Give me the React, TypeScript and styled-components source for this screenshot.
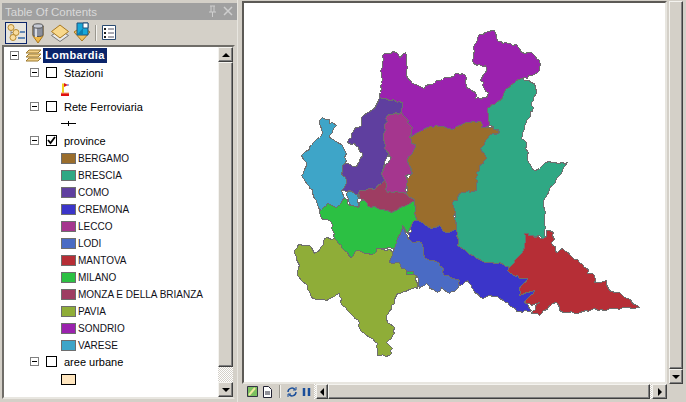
import styled, { createGlobalStyle } from 'styled-components'

const GlobalStyle = createGlobalStyle`
  html, body { margin: 0; padding: 0; background: #d4d0c8; overflow: hidden; }
  #root { width: 686px; height: 402px; }
`

// Window layout
const Shell = styled.div`
  width: 686px;
  height: 402px;
  display: grid;
  grid-template-columns: 238px 448px;
  background: #d4d0c8;
  font-family: 'Liberation Sans', Arial, sans-serif;
  font-size: 11px;
  color: #000;
  overflow: hidden;
`

const Dock = styled.div`
  display: flex;
  flex-direction: column;
  padding: 3px 0 3px 2px;
  box-sizing: border-box;
  height: 402px;
  border-right: 1px solid #e8e6e0;
`

const TitleBar = styled.div`
  height: 17px;
  flex: none;
  background: #a0a0a0;
  color: #d9d9d9;
  display: flex;
  align-items: center;
  padding-left: 3px;
  font-size: 11.500px;
`

const TitleText = styled.span`
  flex: 1;
`

const TitleIcon = styled.svg`
  width: 15px;
  height: 13px;
  flex: none;
  margin-right: 1px;
`

const Toolbar = styled.div`
  height: 25px;
  flex: none;
  display: flex;
  align-items: center;
  padding-left: 3px;
`

const ToolButton = styled.div<{ $active?: boolean }>`
  width: 22px;
  height: 22px;
  box-sizing: border-box;
  display: flex;
  align-items: center;
  justify-content: center;
  border: 1px solid ${(p) => (p.$active ? '#0a246a' : 'transparent')};
  background: ${(p) => (p.$active ? '#e6e4de' : 'transparent')};
`

const ToolSeparator = styled.div`
  width: 1px;
  height: 16px;
  margin: 0 2px;
  background: #9a978f;
  box-shadow: 1px 0 0 #f4f3ef;
`

const TreeFrame = styled.div`
  flex: 1;
  min-height: 0;
  display: flex;
  border: 2px solid;
  border-color: #6f6d68 #d4d0c8 #e8e6e0 #6f6d68;
  background: #fff;
  margin-right: 2px;
`

const Tree = styled.div`
  flex: 1;
  overflow: hidden;
`

const Row = styled.div<{ $indent: number }>`
  height: 17px;
  display: flex;
  align-items: center;
  padding-left: ${(p) => p.$indent}px;
  white-space: nowrap;
`

const Expander = styled.span`
  width: 9px;
  height: 9px;
  box-sizing: border-box;
  border: 1px solid #808080;
  background: #fff;
  flex: none;
  display: flex;
  align-items: center;
  justify-content: center;
  &::after {
    content: '';
    width: 5px;
    height: 1px;
    background: #000;
  }
`

const CheckBox = styled.span`
  width: 11px;
  height: 11px;
  box-sizing: border-box;
  border: 1px solid #000;
  margin-left: 7px;
  margin-right: 7px;
  flex: none;
  display: flex;
  background: #fff;
`

const RootIcon = styled.svg`
  margin-left: 6px;
  flex: none;
`

const RootLabel = styled.span`
  background: #0a246a;
  color: #fff;
  font-weight: bold;
  height: 15px;
  line-height: 15px;
  padding: 0 2px;
  margin-left: 1px;
  letter-spacing: 0.4px;
`

const Swatch = styled.span<{ $color: string; $edge?: string }>`
  width: 15px;
  height: 11px;
  box-sizing: border-box;
  flex: none;
  margin: 1px 2px 0 0;
  background: ${(p) => p.$color};
  border: 1px solid ${(p) => p.$edge || '#6e6e6e'};
`

const ClassLabel = styled.span`
  font-size: 10px;
  color: #101018;
  padding-top: 2px;
`

// Scrollbars
const VBar = styled.div`
  width: 15px;
  flex: none;
  display: flex;
  flex-direction: column;
  background-color: #ece9e2;
  background-image: conic-gradient(#d4d0c8 25%, #fff 0 50%, #d4d0c8 0 75%, #fff 0);
  background-size: 2px 2px;
`

const HBar = styled(VBar)`
  width: auto;
  height: 15px;
  flex-direction: row;
  flex: 1;
`

const Bevel = styled.div<{ $size?: number; $grow?: boolean }>`
  box-sizing: border-box;
  flex: ${(p) => (p.$grow ? 1 : 'none')};
  ${(p) => (p.$size ? `height: ${p.$size}px;` : '')}
  background: #d4d0c8;
  border: 1px solid;
  border-color: #f4f3ef #404040 #404040 #f4f3ef;
  box-shadow: inset -1px -1px 0 #808080;
  display: flex;
  align-items: center;
  justify-content: center;
`

const ScrollGap = styled.div`
  flex: 1;
`

const HThumb = styled(Bevel)`
  height: 15px;
`

const HArrow = styled(Bevel)<{ $width: number; $gap?: number }>`
  width: ${(p) => p.$width}px;
  height: 15px;
  margin-left: ${(p) => p.$gap || 0}px;
`

const Arrow = styled.span<{ $dir: 'up' | 'down' | 'left' | 'right' }>`
  width: 0;
  height: 0;
  border-style: solid;
  border-color: transparent;
  ${(p) =>
    p.$dir === 'up'
      ? 'border-width: 0 4px 4px; border-bottom-color: #000;'
      : p.$dir === 'down'
        ? 'border-width: 4px 4px 0; border-top-color: #000;'
        : p.$dir === 'left'
          ? 'border-width: 4px 4px 4px 0; border-right-color: #000;'
          : 'border-width: 4px 0 4px 4px; border-left-color: #000;'}
`

// Map side
const MapSide = styled.div`
  display: grid;
  grid-template-columns: 425px 14px;
  grid-template-rows: 383px 15px;
  padding: 1px 0 0 4px;
  column-gap: 2px;
`

const MapFrame = styled.div`
  box-sizing: border-box;
  border: 2px solid;
  border-color: #5c5a56 #e8e6e0 #e8e6e0 #5c5a56;
  background: #fff;
  overflow: hidden;
  display: flex;
`

const MapSvg = styled.svg`
  display: block;
  flex: none;
`

const VBarTall = styled(VBar)`
  width: 14px;
  height: 383px;
  box-sizing: border-box;
`

const StatusRow = styled.div`
  display: flex;
  align-items: center;
  padding-left: 3px;
  height: 15px;
`

const StatusButton = styled.div`
  width: 15px;
  height: 15px;
  display: flex;
  align-items: center;
  justify-content: center;
  flex: none;
`

const StatusSeparator = styled.div`
  width: 1px;
  height: 13px;
  margin: 0 4px;
  background: #9a978f;
  box-shadow: 1px 0 0 #f4f3ef;
  flex: none;
`

// Toolbar drawings
const ListByDrawing = () => (
  <svg width='20' height='20' viewBox='0 0 20 20'>
    <path d='M5 5v9h3M5 9.500h5' fill='none' stroke='#8a8a8a' />
    <circle cx='5' cy='4.500' r='3' fill='#f8dca0' stroke='#b88a30' />
    <circle cx='10' cy='9.500' r='3' fill='#f8dca0' stroke='#b88a30' />
    <circle cx='7' cy='14.500' r='3' fill='#f8dca0' stroke='#b88a30' />
    <path d='M14 9h5M12 15h7' stroke='#3a6aa8' strokeWidth='1.500' />
  </svg>
)

const ListBySource = () => (
  <svg width='20' height='22' viewBox='0 0 20 22'>
    <path d='M5 4v10l5 7 5-7V4z' fill='#f0b848' stroke='#a87820' />
    <path d='M5 4v9c0 2 10 2 10 0V4z' fill='#8a8f9c' stroke='#555' />
    <path d='M8 5v10' stroke='#d8dbe2' strokeWidth='2' />
    <ellipse cx='10' cy='4' rx='5' ry='2.200' fill='#c6cad4' stroke='#555' />
  </svg>
)

const ListByVisibility = () => (
  <svg width='20' height='20' viewBox='0 0 20 20'>
    <path d='M1.500 12.500l8.500-5.500 8.500 5.500-8.500 6z' fill='#e8e8e8' stroke='#777' />
    <path d='M1.500 8.500L10 2l8.500 6.500-8.500 6.500z' fill='#f8d88c' stroke='#a87820' />
  </svg>
)

const ListBySelection = () => (
  <svg width='20' height='22' viewBox='0 0 20 22'>
    <path d='M2 10l8 9 8-9-3-2H5z' fill='#f0c060' stroke='#a87820' />
    <path d='M5 1h11v12H5z' fill='#18a8d8' stroke='#20507a' />
    <path d='M11 1h5v5h-5z' fill='#fff' stroke='#20507a' />
    <path d='M5 13l6-7v7z' fill='#0c7fb0' />
  </svg>
)

const OptionsIcon = () => (
  <svg width='14' height='15' viewBox='0 0 14 15'>
    <path d='M.5.5h13v14H.5z' fill='#fff' stroke='#2a4a70' />
    <path d='M2 3h2v2H2zM2 7h2v2H2zM2 11h2v2H2z' fill='#222' />
    <path d='M6 4h6M6 8h6M6 12h6' stroke='#556' />
  </svg>
)

const FlagSymbol = () => (
  <svg width='15' height='15' viewBox='0 0 15 15'>
    <path d='M2 1.500v10' stroke='#f0d020' strokeWidth='2' />
    <path d='M3 1l4 2-4 2z' fill='#e01818' />
    <path d='M6 3h2' stroke='#5060d0' />
    <path d='M0 11h8v3H0z' fill='#e01010' />
    <path d='M0 11h8' stroke='#f0a878' />
  </svg>
)

const LineSymbol = () => (
  <svg width='15' height='15' viewBox='0 0 15 15'>
    <path d='M0 7.500h15M7.500 5v5' stroke='#000' />
  </svg>
)

const CheckMark = () => (
  <svg width='9' height='9' viewBox='0 0 9 9'>
    <path d='M1 4l2.500 3L8 1' fill='none' stroke='#000' strokeWidth='1.800' />
  </svg>
)

// Map data, page coordinates as read from the screenshot
type Pt = [number, number]

const hash = (x: number, y: number) => {
  const s = Math.sin(x * 12.9898 + y * 78.233) * 43758.5453
  return s - Math.floor(s)
}

// Breaks a straight edge into little steps so the border looks like raster data
const roughen = (pts: Pt[]) => {
  const out: string[] = []
  pts.forEach((a, i) => {
    const b = pts[(i + 1) % pts.length]
    const n = Math.max(1, Math.round(Math.hypot(b[0] - a[0], b[1] - a[1]) / 3))
    for (let k = 0; k < n; k++) {
      const x = Math.round(a[0] + ((b[0] - a[0]) * k) / n)
      const y = Math.round(a[1] + ((b[1] - a[1]) * k) / n)
      const dx = k === 0 ? 0 : Math.round(hash(x, y) * 2 - 1)
      const dy = k === 0 ? 0 : Math.round(hash(y, x) * 2 - 1)
      out.push(`${x + dx + 0.5},${y + dy + 0.5}`)
    }
  })
  return out.join(' ')
}

const regions: { name: string; color: string; pts: Pt[] }[] = [
  {
    name: 'SONDRIO',
    color: '#9b22ae',
    pts: [[385,53],[397,52],[400,57],[406,52],[407,63],[407,75],[413,83],[425,88],[437,80],[448,77],[458,73],[463,73],[467,78],[468,88],[476,92],[476,98],[487,97],[489,92],[481,80],[487,70],[486,65],[474,63],[474,47],[480,34],[495,30],[497,38],[503,43],[517,44],[522,52],[532,52],[540,60],[540,70],[528,78],[523,78],[507,88],[503,97],[488,108],[490,125],[482,128],[470,126],[458,130],[428,130],[417,136],[410,137],[402,120],[402,112],[403,102],[380,97],[383,62]],
  },
  {
    name: 'VARESE',
    color: '#3ea5c8',
    pts: [[323,117],[337,125],[330,137],[340,143],[345,150],[347,160],[343,165],[342,173],[347,183],[342,190],[345,198],[337,207],[328,203],[320,210],[315,198],[313,192],[307,183],[302,175],[307,165],[302,155],[322,135],[320,120]],
  },
  {
    name: 'VARESE2',
    color: '#3ea5c8',
    pts: [[347,193],[352,190],[359,197],[359,207],[352,207]],
  },
  {
    name: 'COMO',
    color: '#5f3f9f',
    pts: [[380,97],[403,102],[402,112],[388,115],[384,133],[385,148],[392,157],[388,155],[382,173],[385,180],[377,187],[360,190],[360,197],[350,190],[342,190],[347,183],[342,173],[343,165],[348,163],[357,166],[363,153],[355,143],[348,142],[355,128],[362,125],[362,117],[375,108]],
  },
  {
    name: 'LECCO',
    color: '#a5368e',
    pts: [[402,112],[413,127],[410,137],[416,147],[408,160],[413,173],[406,175],[407,187],[408,195],[403,192],[388,192],[385,180],[382,173],[392,157],[385,148],[384,133],[388,115]],
  },
  {
    name: 'MONZA',
    color: '#9e3d62',
    pts: [[360,198],[360,190],[377,187],[385,180],[388,192],[403,192],[408,195],[415,200],[412,202],[392,212],[368,205],[365,200]],
  },
  {
    name: 'BERGAMO',
    color: '#9a6d2c',
    pts: [[417,133],[428,127],[440,126],[455,128],[470,122],[481,121],[482,127],[495,128],[500,133],[490,135],[481,148],[487,158],[477,172],[477,190],[463,192],[453,203],[457,228],[447,232],[440,225],[432,228],[418,220],[415,213],[415,200],[408,195],[407,178],[413,173],[408,160],[416,147],[410,137]],
  },
  {
    name: 'BRESCIA',
    color: '#2fa884',
    pts: [[523,78],[535,83],[537,93],[532,102],[534,107],[530,117],[525,125],[522,138],[527,142],[528,157],[533,169],[540,168],[546,162],[568,162],[558,177],[544,200],[546,227],[546,237],[533,235],[525,233],[525,247],[518,257],[510,267],[500,262],[495,263],[482,260],[458,245],[457,227],[453,203],[463,192],[477,190],[477,172],[487,158],[481,148],[490,135],[500,132],[490,125],[488,108],[503,97],[507,88]],
  },
  {
    name: 'CREMONA',
    color: '#3b35c9',
    pts: [[408,238],[413,222],[418,220],[432,228],[440,225],[447,232],[457,228],[458,245],[482,260],[495,263],[500,262],[510,267],[508,270],[520,278],[528,278],[520,288],[520,295],[535,290],[525,302],[532,310],[523,312],[513,307],[500,298],[490,295],[483,298],[475,292],[468,280],[460,285],[445,275],[440,263],[425,257],[422,242],[413,242]],
  },
  {
    name: 'PAVIA',
    color: '#8fad38',
    pts: [[295,253],[298,245],[310,245],[315,253],[320,250],[325,238],[335,238],[345,250],[352,257],[357,250],[375,253],[377,248],[392,250],[393,253],[390,262],[400,262],[402,268],[417,275],[418,288],[413,288],[398,293],[395,303],[387,315],[388,322],[395,327],[395,333],[387,342],[393,348],[390,355],[378,355],[378,343],[365,333],[360,328],[360,322],[350,312],[343,305],[340,293],[327,300],[312,297],[308,285],[298,275],[300,265]],
  },
  {
    name: 'LODI',
    color: '#4a6bc4',
    pts: [[403,225],[408,238],[413,242],[422,242],[425,257],[440,263],[445,275],[460,280],[458,288],[450,293],[442,287],[438,292],[430,288],[427,283],[420,288],[417,275],[402,268],[400,262],[390,262],[393,252],[395,248],[398,238]],
  },
  {
    name: 'MILANO',
    color: '#2cc043',
    pts: [[320,210],[328,203],[337,207],[345,198],[350,205],[359,207],[362,200],[365,200],[368,205],[392,212],[412,202],[415,200],[415,213],[418,220],[413,222],[408,233],[403,225],[398,238],[395,248],[377,248],[375,253],[357,250],[352,257],[345,250],[335,238],[332,222],[322,218]],
  },
  {
    name: 'MANTOVA',
    color: '#b62e36',
    pts: [[525,233],[533,235],[535,237],[546,237],[547,230],[554,232],[553,245],[558,252],[563,248],[580,262],[588,268],[588,273],[595,275],[595,282],[607,280],[610,290],[620,292],[625,297],[640,307],[623,307],[607,310],[595,308],[578,313],[560,310],[558,303],[553,303],[540,315],[532,313],[540,302],[532,305],[525,302],[535,290],[520,295],[520,288],[528,278],[520,278],[508,270],[510,267],[518,257],[525,247]],
  },
]

const layers = [
  ['BERGAMO', '#9a6d2c'],
  ['BRESCIA', '#2fa884'],
  ['COMO', '#5f3f9f'],
  ['CREMONA', '#3b35c9'],
  ['LECCO', '#a5368e'],
  ['LODI', '#4a6bc4'],
  ['MANTOVA', '#b62e36'],
  ['MILANO', '#2cc043'],
  ['MONZA E DELLA BRIANZA', '#9e3d62'],
  ['PAVIA', '#8fad38'],
  ['SONDRIO', '#9b22ae'],
  ['VARESE', '#3ea5c8'],
]

const LayerRow = ({ label, checked }: { label: string; checked?: boolean }) => (
  <Row $indent={26}>
    <Expander />
    <CheckBox>{checked && <CheckMark />}</CheckBox>
    {label}
  </Row>
)

export default function App() {
  return (
    <Shell>
      <GlobalStyle />
      <Dock>
        <TitleBar>
          <TitleText>Table Of Contents</TitleText>
          <TitleIcon viewBox='0 0 15 13'>
            <path d='M5 1h5M6 1v6M9 1v6M4 7h7M7.500 7v5' stroke='#cfcfcf' fill='none' />
          </TitleIcon>
          <TitleIcon viewBox='0 0 15 13'>
            <path d='M3 2l8 8M11 2l-8 8' stroke='#cfcfcf' strokeWidth='1.500' />
          </TitleIcon>
        </TitleBar>
        <Toolbar>
          <ToolButton $active>
            <ListByDrawing />
          </ToolButton>
          <ToolButton>
            <ListBySource />
          </ToolButton>
          <ToolButton>
            <ListByVisibility />
          </ToolButton>
          <ToolButton>
            <ListBySelection />
          </ToolButton>
          <ToolSeparator />
          <ToolButton>
            <OptionsIcon />
          </ToolButton>
        </Toolbar>
        <TreeFrame>
          <Tree>
            <Row $indent={6}>
              <Expander />
              <RootIcon width='17' height='15' viewBox='0 0 17 15'>
                <path d='M4 2h12l-3 3H1zM4 6h12l-3 3H1zM4 10h12l-3 3H1z' fill='#f4d28a' stroke='#9c7a30' />
              </RootIcon>
              <RootLabel>Lombardia</RootLabel>
            </Row>
            <LayerRow label='Stazioni' />
            <Row $indent={57}>
              <FlagSymbol />
            </Row>
            <LayerRow label='Rete Ferroviaria' />
            <Row $indent={57}>
              <LineSymbol />
            </Row>
            <LayerRow label='province' checked />
            {layers.map(([name, color]) => (
              <Row key={name} $indent={57}>
                <Swatch $color={color} />
                <ClassLabel>{name}</ClassLabel>
              </Row>
            ))}
            <LayerRow label='aree urbane' />
            <Row $indent={57}>
              <Swatch $color='#ffe6bf' $edge='#000' />
            </Row>
          </Tree>
          <VBar>
            <Bevel $size={15}>
              <Arrow $dir='up' />
            </Bevel>
            <Bevel $size={305}>{null}</Bevel>
            <ScrollGap />
            <Bevel $size={15}>
              <Arrow $dir='down' />
            </Bevel>
          </VBar>
        </TreeFrame>
      </Dock>
      <MapSide>
        <MapFrame>
          <MapSvg width='421' height='379' viewBox='245 3 421 379' shapeRendering='crispEdges'>
            {regions.map((r) => (
              <polygon key={r.name} points={roughen(r.pts)} fill={r.color} stroke='#6e6e6e' strokeWidth='1' />
            ))}
            <path d='M407 271h7v3h-7z' fill='#2cc043' stroke='#6e6e6e' />
          </MapSvg>
        </MapFrame>
        <VBarTall>
          <Bevel $grow>{null}</Bevel>
          <Bevel $size={15}>
            <Arrow $dir='down' />
          </Bevel>
        </VBarTall>
        <StatusRow>
          <StatusButton>
            <svg width='11' height='11' viewBox='0 0 11 11'>
              <path d='M.5.5h10v10H.5z' fill='#7cc060' stroke='#334' />
              <path d='M2 9l6-7' stroke='#f0e8a0' strokeWidth='2' />
            </svg>
          </StatusButton>
          <StatusButton>
            <svg width='11' height='12' viewBox='0 0 11 12'>
              <path d='M1.500.5h5l3 3v8h-8z' fill='#fff' stroke='#223' />
              <path d='M3 6h5M3 8h5' stroke='#223' />
            </svg>
          </StatusButton>
          <StatusSeparator />
          <StatusButton>
            <svg width='12' height='12' viewBox='0 0 12 12'>
              <path d='M2 6a4 4 0 0 1 7-2.500M10 6a4 4 0 0 1-7 2.500' fill='none' stroke='#1a4e9a' strokeWidth='1.500' />
              <path d='M10 1v3H7M2 11V8h3' fill='none' stroke='#1a4e9a' />
            </svg>
          </StatusButton>
          <StatusButton>
            <svg width='10' height='10' viewBox='0 0 10 10'>
              <path d='M2 1v8M7 1v8' stroke='#1a4e9a' strokeWidth='2.500' />
            </svg>
          </StatusButton>
          <HBar>
            <HArrow $width={12} $gap={2}>
              <Arrow $dir='left' />
            </HArrow>
            <HThumb $grow>{null}</HThumb>
            <HArrow $width={15} $gap={2}>
              <Arrow $dir='right' />
            </HArrow>
          </HBar>
        </StatusRow>
      </MapSide>
    </Shell>
  )
}
